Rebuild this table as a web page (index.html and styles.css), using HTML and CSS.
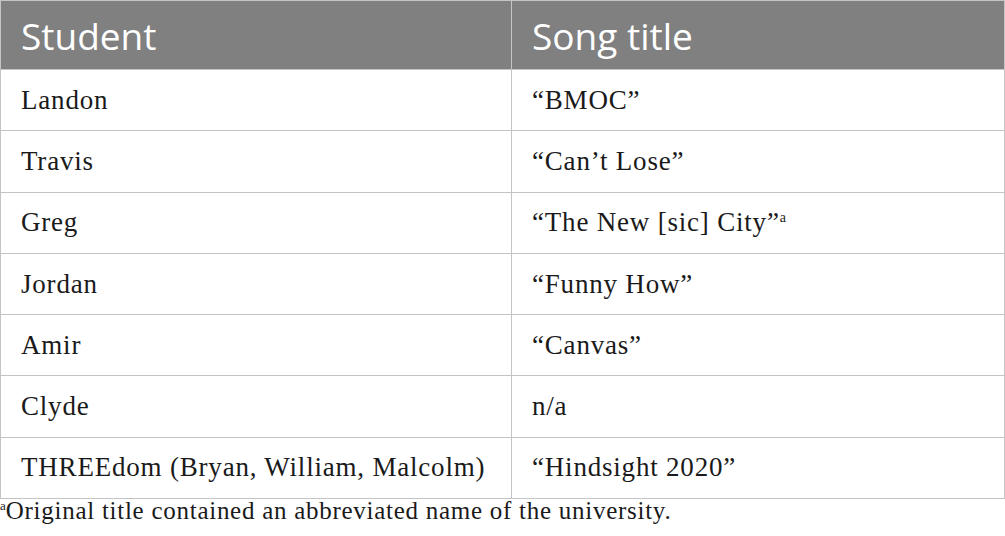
FILE: index.html
```html
<!DOCTYPE html>
<html>
<head>
<meta charset="utf-8">
<link rel="stylesheet" href="styles.css">
</head>
<body>
<table class="tbl">
<thead>
<tr><th class="c1">Student</th><th>Song title</th></tr>
</thead>
<tbody>
<tr><td>Landon</td><td>“BMOC”</td></tr>
<tr><td>Travis</td><td>“Can’t Lose”</td></tr>
<tr><td>Greg</td><td>“The New [sic] City”<sup class="fn">a</sup></td></tr>
<tr><td>Jordan</td><td>“Funny How”</td></tr>
<tr><td>Amir</td><td>“Canvas”</td></tr>
<tr><td>Clyde</td><td>n/a</td></tr>
<tr><td>THREEdom (Bryan, William, Malcolm)</td><td>“Hindsight 2020”</td></tr>
</tbody>
</table>
<p class="note"><sup class="fn">a</sup>Original title contained an abbreviated name of the university.</p>
</body>
</html>
```
FILE: styles.css
```css
html, body { margin: 0; padding: 0; background: #fff; }
body { min-height: 536px; }
.tbl {
  border-collapse: collapse;
  width: 1005px;
  font-family: "Liberation Serif", serif;
  color: #1a1a1a;
}
.tbl th {
  background: #808080;
  color: #fff;
  font-family: "Open Sans", sans-serif;
  font-weight: 400;
  font-size: 37px;
  text-align: left;
  height: 69px;
  padding: 0 0 0 20px;
  border: 1px solid #c4c4c4;
  box-sizing: border-box;
}
.tbl th.c1, .tbl td:first-child { width: 511px; }
.tbl td {
  font-size: 27px;
  letter-spacing: 0.8px;
  height: 61.3px;
  padding: 0 0 0 20px;
  border: 1px solid #c4c4c4;
  box-sizing: border-box;
}
.fn { font-size: 14px; vertical-align: 9px; line-height: 0; letter-spacing: 0; }
.note {
  margin: 0;
  padding-bottom: 14px;
  font-family: "Liberation Serif", serif;
  font-size: 25px;
  line-height: 23px;
  letter-spacing: 0.73px;
  color: #1a1a1a;
}
.note .fn { font-size: 13px; vertical-align: 9px; }
```
